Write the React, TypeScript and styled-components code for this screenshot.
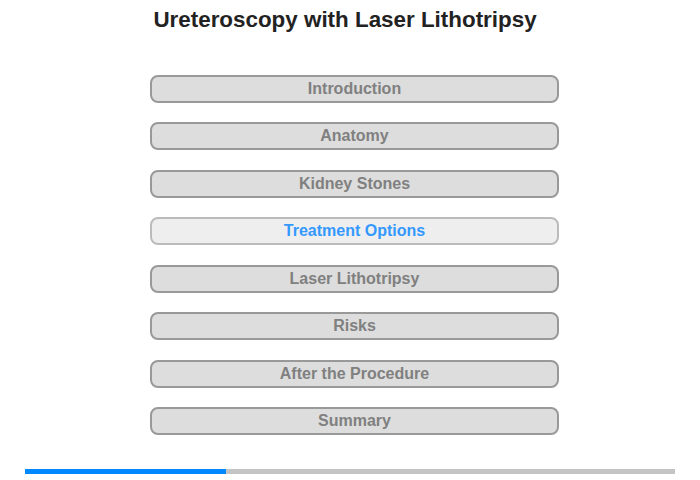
import React from "react";
import styled, { createGlobalStyle } from "styled-components";

const Global = createGlobalStyle`
  html, body { margin: 0; padding: 0; background: #ffffff; }
  body { font-family: "Liberation Sans", Arial, sans-serif; }
`;

const Page = styled.div`
  width: 700px;
  height: 480px;
  display: flex;
  flex-direction: column;
  box-sizing: border-box;
`;

const Title = styled.h1`
  margin: 0;
  padding: 7px 10px 0 0;
  height: 74.5px;
  box-sizing: border-box;
  text-align: center;
  font-size: 22.4px;
  font-weight: bold;
  color: #222222;
  line-height: 26px;
`;

const Menu = styled.nav`
  display: flex;
  flex-direction: column;
  gap: 19.5px;
  padding-left: 150px;
`;

const MenuButton = styled.div<{ $active?: boolean }>`
  width: 409px;
  height: 28px;
  box-sizing: border-box;
  border: 2px solid ${(p) => (p.$active ? "#bbbbbb" : "#999999")};
  background: ${(p) => (p.$active ? "#eeeeee" : "#dddddd")};
  border-radius: 8px;
  display: flex;
  align-items: center;
  justify-content: center;
  font-size: 16px;
  font-weight: bold;
  color: ${(p) => (p.$active ? "#3399ff" : "#808080")};
  cursor: pointer;
`;

const Progress = styled.div`
  margin: 33.5px 0 0 25px;
  width: 650px;
  height: 5px;
  background: #c4c4c4;
  display: flex;
`;

const ProgressFill = styled.div`
  height: 100%;
  background: #0088ff;
`;

const items = [
  "Introduction",
  "Anatomy",
  "Kidney Stones",
  "Treatment Options",
  "Laser Lithotripsy",
  "Risks",
  "After the Procedure",
  "Summary",
];

export default function App() {
  return (
    <>
      <Global />
      <Page>
        <Title>Ureteroscopy with Laser Lithotripsy</Title>
        <Menu>
          {items.map((t) => (
            <MenuButton key={t} $active={t === "Treatment Options"}>
              {t}
            </MenuButton>
          ))}
        </Menu>
        <Progress>
          <ProgressFill style={{ width: `${(201 / 650) * 100}%` }} />
        </Progress>
      </Page>
    </>
  );
}
